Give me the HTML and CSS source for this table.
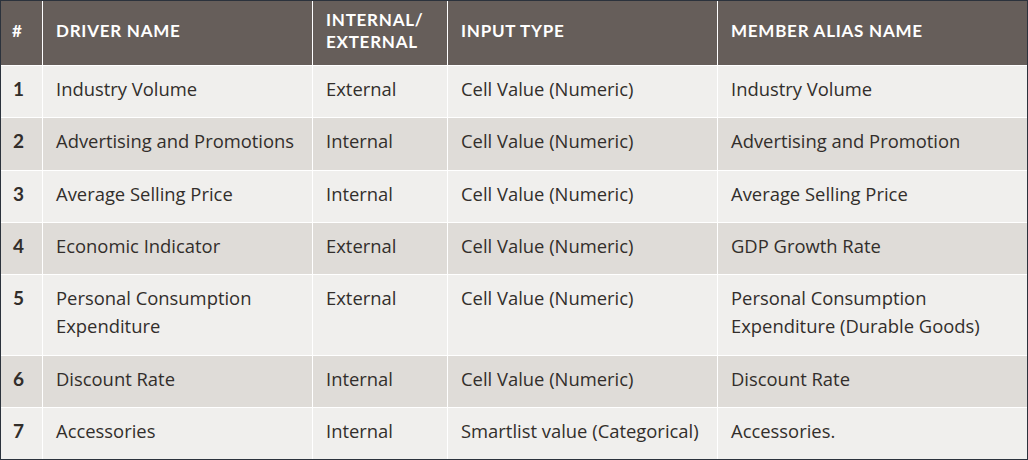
FILE: index.html
```html
<!DOCTYPE html>
<html lang="en">
<head>
<meta charset="utf-8">
<title>Drivers</title>
<link rel="stylesheet" href="styles.css">
</head>
<body>
<table class="drivers">
  <thead>
    <tr>
      <th class="c-num">#</th>
      <th class="c-name">DRIVER NAME</th>
      <th class="c-ie">INTERNAL/<br>EXTERNAL</th>
      <th class="c-type">INPUT TYPE</th>
      <th class="c-alias">MEMBER ALIAS NAME</th>
    </tr>
  </thead>
  <tbody>
    <tr class="odd"><td class="num">1</td><td>Industry Volume</td><td>External</td><td>Cell Value (Numeric)</td><td>Industry Volume</td></tr>
    <tr class="even"><td class="num">2</td><td>Advertising and Promotions</td><td>Internal</td><td>Cell Value (Numeric)</td><td>Advertising and Promotion</td></tr>
    <tr class="odd"><td class="num">3</td><td>Average Selling Price</td><td>Internal</td><td>Cell Value (Numeric)</td><td>Average Selling Price</td></tr>
    <tr class="even"><td class="num">4</td><td>Economic Indicator</td><td>External</td><td>Cell Value (Numeric)</td><td>GDP Growth Rate</td></tr>
    <tr class="odd"><td class="num">5</td><td>Personal Consumption<br>Expenditure</td><td>External</td><td>Cell Value (Numeric)</td><td>Personal Consumption<br>Expenditure (Durable Goods)</td></tr>
    <tr class="even"><td class="num">6</td><td>Discount Rate</td><td>Internal</td><td>Cell Value (Numeric)</td><td>Discount Rate</td></tr>
    <tr class="odd"><td class="num">7</td><td>Accessories</td><td>Internal</td><td>Smartlist value (Categorical)</td><td>Accessories.</td></tr>
  </tbody>
</table>
</body>
</html>
```

FILE: styles.css
```css
html, body {
  margin: 0;
  padding: 0;
  background: #f0efed;
}

.drivers {
  width: 1028px;
  border-collapse: separate;
  border-spacing: 0;
  table-layout: fixed;
  border: 1px solid #2b323c;
  font-family: "Open Sans", Lato, sans-serif;
  color: #322e2b;
}

.drivers th,
.drivers td {
  box-sizing: border-box;
  text-align: left;
  border-left: 1px solid #ffffff;
}

.drivers th:first-child,
.drivers td:first-child {
  border-left: none;
}

.drivers th {
  background: #665e5a;
  color: #ffffff;
  font-family: Lato, "Open Sans", sans-serif;
  font-weight: 700;
  font-size: 17px;
  letter-spacing: 0.75px;
  line-height: 22px;
  height: 64px;
  padding: 8px 13px 12px;
  vertical-align: middle;
}

.c-num { width: 41px; padding-left: 11px !important; }
.c-name { width: 270px; }
.c-ie { width: 135px; }
.c-type { width: 270px; }
.c-alias { width: 310px; }

.drivers td {
  font-size: 18.4px;
  line-height: 28px;
  padding: 9px 13px 14.33px;
  vertical-align: top;
  border-top: 1px solid #ffffff;
}

.drivers td.num {
  font-family: Lato, "Open Sans", sans-serif;
  font-weight: 700;
  font-size: 19px;
  padding-left: 12px;
}

.odd td { background: #f0efed; }
.even td { background: #dfdcd8; }
```
